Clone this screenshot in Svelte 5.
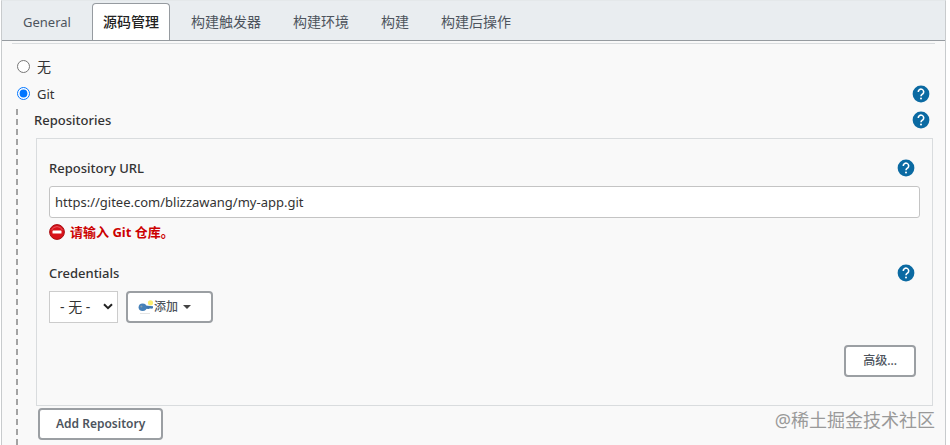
<script>
    const tabs = ["General", "源码管理", "构建触发器", "构建环境", "构建", "构建后操作"];

    let active = "源码管理";
    let scm = "git";
    let url = "https://gitee.com/blizzawang/my-app.git";
    let credential = "none";
</script>

{#snippet help(label)}
    <button type="button" class="help" aria-label={label}>
        <svg viewBox="0 0 18 18" width="18" height="18">
            <circle cx="9" cy="9" r="8.4" fill="#0b6aa2" />
            <path
                d="M6.3 7a2.7 2.7 0 1 1 4.3 2C9.6 9.7 9 10 9 11.2"
                fill="none"
                stroke="#fff"
                stroke-width="1.6"
            />
            <circle cx="9" cy="13.5" r="1" fill="#fff" />
        </svg>
    </button>
{/snippet}

<main>
    <nav>
        {#each tabs as tab}
            <button type="button" class="tab" class:active={tab === active} on:click={() => (active = tab)}>
                {tab}
            </button>
        {/each}
    </nav>

    <form>
        <div class="row choice">
            <label><input type="radio" name="scm" value="none" bind:group={scm} /> 无</label>
        </div>
        <div class="row choice">
            <label><input type="radio" name="scm" value="git" bind:group={scm} /> Git</label>
            {@render help("Git")}
        </div>

        <div class="group">
            <div class="row">
                <span class="title">Repositories</span>
                {@render help("Repositories")}
            </div>

            <section>
                <div class="row">
                    <label class="title" for="url">Repository URL</label>
                    {@render help("Repository URL")}
                </div>
                <input id="url" type="text" bind:value={url} />
                <p class="error">
                    <svg viewBox="0 0 16 16" width="16" height="16">
                        <circle cx="8" cy="8" r="7.4" fill="#d8121a" stroke="#a80d12" />
                        <path d="M2.5 6.2a6 6 0 0 1 11 0" fill="none" stroke="#ee6a6e" stroke-width="0.8" />
                        <rect x="3.5" y="6.4" width="9" height="3.2" rx="0.6" fill="#fff" />
                    </svg>
                    请输入 Git 仓库。
                </p>

                <div class="row">
                    <label class="title" for="credential">Credentials</label>
                    {@render help("Credentials")}
                </div>
                <div class="credentials">
                    <span class="select">
                        <select id="credential" bind:value={credential}>
                            <option value="none">- 无 -</option>
                        </select>
                        <svg viewBox="0 0 10 7" width="10" height="7">
                            <path d="M1 1.2l4 4 4-4" fill="none" stroke="#222" stroke-width="2" />
                        </svg>
                    </span>
                    <button type="button" class="btn add">
                        <svg viewBox="0 0 16 16" width="16" height="16">
                            <path d="M2 14.5h10" stroke="#ddd" stroke-width="0.8" />
                            <circle cx="12.5" cy="3.8" r="2.6" fill="#fbee6e" />
                            <path d="M7 6.6l8 .6v2l-2 .6-1-.6-1 .8-4-.2z" fill="#3f77b0" />
                            <ellipse cx="4.6" cy="8.2" rx="4" ry="3.8" fill="#4580b8" />
                            <circle cx="3.4" cy="7.6" r="1" fill="#8a9ba8" />
                        </svg>
                        添加
                        <svg class="caret" viewBox="0 0 8 4" width="8" height="4">
                            <path d="M0 0h8L4 4z" fill="#444" />
                        </svg>
                    </button>
                </div>

                <div class="advanced">
                    <button type="button" class="btn">高级...</button>
                </div>
            </section>

            <button type="button" class="btn repo">Add Repository</button>
        </div>
    </form>

    <div class="watermark">@稀土掘金技术社区</div>
</main>

<style>
    :global(body) {
        background: #fff;
    }

    main {
        position: relative;
        display: flex;
        flex-direction: column;
        box-sizing: border-box;
        min-height: 100vh;
        margin: 0 4px 0 1px;
        border: 1px solid #c8cbcd;
        border-top-color: #e4e8ea;
        border-bottom: none;
        background: #f9f9f9;
        color: #333;
        font-family: "Noto Sans", "Noto Sans CJK SC", sans-serif;
        font-size: 13px;
        line-height: 20px;
    }

    button,
    input,
    select {
        box-sizing: border-box;
        font-family: inherit;
        font-size: inherit;
        line-height: inherit;
        color: inherit;
    }

    svg {
        display: block;
        flex: none;
    }

    nav {
        display: flex;
        gap: 10px;
        padding: 2px 10px 0;
        border-bottom: 1px solid #969ba0;
        background: #e9edf0;
    }

    .tab {
        height: 37px;
        padding: 0 10px;
        border: 1px solid transparent;
        border-bottom: none;
        border-radius: 4px 4px 0 0;
        background: transparent;
        color: #4d545d;
        font-size: 14px;
    }

    .tab:first-child {
        font-size: 13px;
    }

    .tab.active {
        border-color: #969ba0;
        background: #fff;
        color: #222;
        font-weight: 500;
    }

    form {
        display: flex;
        flex: 1;
        flex-direction: column;
        margin: 2px 10px 0;
        padding: 9px 2px 0 4px;
        border-top: 1px solid #d9dcde;
    }

    .row {
        display: flex;
        align-items: center;
        justify-content: space-between;
        height: 22px;
    }

    .choice {
        height: 27px;
        padding: 0 3px 0 1px;
    }

    .choice label {
        display: flex;
        align-items: center;
        gap: 7px;
    }

    .choice input {
        width: 13px;
        height: 13px;
        margin: 0;
    }

    .choice:first-child {
        font-size: 14px;
    }

    .help {
        padding: 0;
        border: none;
        background: transparent;
        cursor: pointer;
    }

    .title {
        font-weight: 500;
    }

    .group {
        flex: 1;
        margin-top: 2px;
        padding-left: 16px;
        border-left: 2px dashed #a3a3a3;
    }

    .group > .row {
        padding-right: 3px;
    }

    section {
        margin: 7px 0 2px 2px;
        padding: 18px 12px 28px;
        border: 1px solid #d9dcde;
    }

    section .row {
        padding-right: 5px;
    }

    input[type="text"] {
        display: block;
        width: 100%;
        height: 32px;
        margin-top: 7px;
        padding: 0 5px;
        border: 1px solid #c4c4c4;
        border-radius: 3px;
        background: #fff;
    }

    .error {
        display: flex;
        align-items: center;
        gap: 5px;
        margin: 4px 0 20px;
        color: #c00;
        font-weight: 700;
    }

    .credentials {
        display: flex;
        gap: 8px;
        margin-top: 7px;
    }

    .select {
        position: relative;
    }

    .select svg {
        position: absolute;
        top: 12px;
        right: 5px;
        pointer-events: none;
    }

    select {
        width: 69px;
        height: 32px;
        padding: 0 10px;
        border: 1px solid #ccc;
        border-radius: 0;
        background: #fff;
        appearance: none;
        font-size: 14px;
    }

    .btn {
        height: 32px;
        padding: 0 16px;
        border: 2px solid #9b9fa3;
        border-radius: 4px;
        background: #fff;
        color: #4d545d;
        font-size: 12px;
        font-weight: 600;
    }

    .add {
        display: flex;
        align-items: center;
        padding: 0 20px 0 10px;
        font-weight: 500;
    }

    .caret {
        margin-left: 5px;
    }

    .advanced {
        display: flex;
        justify-content: flex-end;
        margin-top: 22px;
        padding-right: 4px;
    }

    .advanced .btn {
        padding: 0 17px;
        font-weight: 500;
    }

    .repo {
        margin-left: 4px;
    }

    .watermark {
        position: absolute;
        right: 10px;
        bottom: 12px;
        color: #999;
        font-size: 18px;
        line-height: 26px;
    }
</style>
